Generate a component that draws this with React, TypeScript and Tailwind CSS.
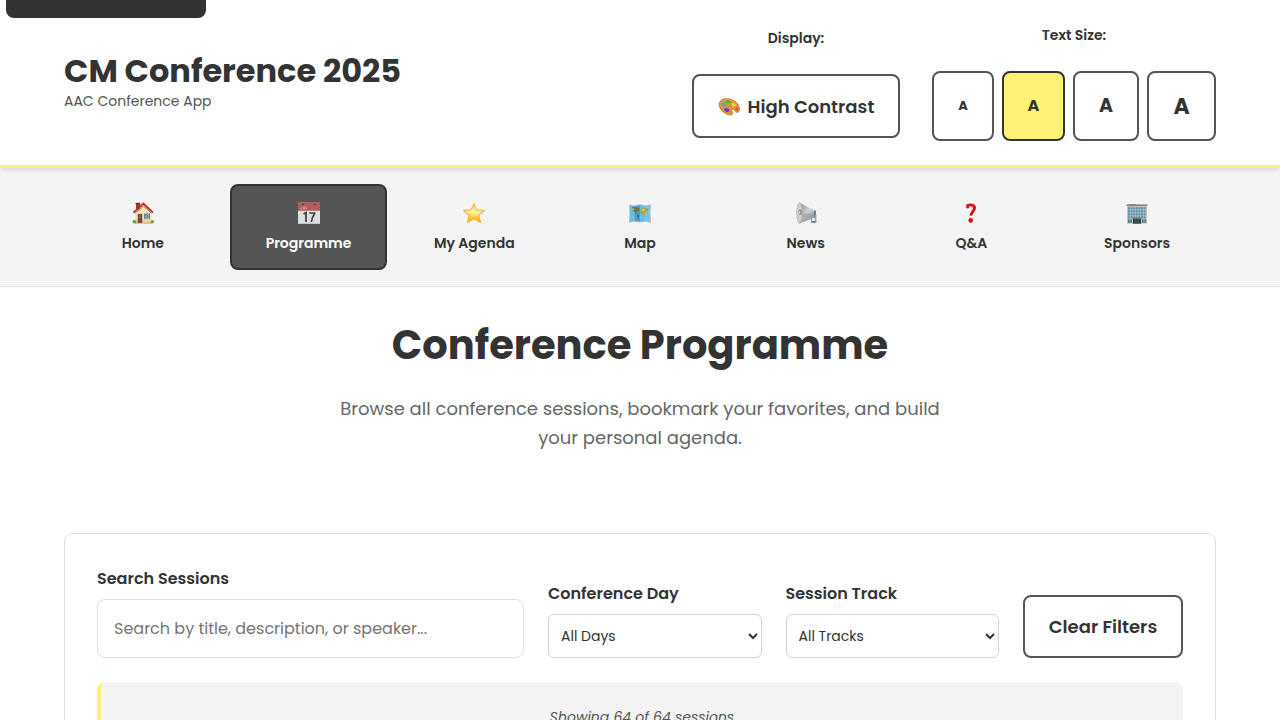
function HouseIcon() {
  return (
    <svg aria-hidden="true" viewBox="0 0 24 24" className="size-6">
      <rect x="5" y="3" width="4" height="7" fill="#a3352c" />
      <rect x="4.6" y="2.8" width="4.8" height="1.4" fill="#7d2620" />
      <path d="M4.4 12.5 12.5 5l7.8 7.5V23H4.4z" fill="#f6e2b8" />
      <path d="M4.4 19h16v4h-16z" fill="#ecd3a0" />
      <path d="M2.5 12.6 12.4 3.6l9.6 9" fill="none" stroke="#b92f2b" strokeWidth="1.9" />
      <path d="M4 13.4 12.4 6l8.2 7.4" fill="none" stroke="#7c3328" strokeWidth=".6" />
      <rect x="6.8" y="14" width="4.4" height="9" fill="#7a4632" />
      <rect x="8" y="15.2" width="2" height="3.3" fill="#547088" />
      <rect x="13" y="13.6" width="6" height="5" fill="#8a6b55" />
      <rect x="13.7" y="14.2" width="4.6" height="3.8" fill="#56a7df" />
      <path d="M3 23a1.5 1.5 0 0 1 0-3c2 0 2.6 1.6 2.2 3zM21.7 23a1.4 1.4 0 0 0 0-2.8c-1.8 0-2.4 1.5-2.2 2.8z" fill="#6d9a35" />
      <path d="M2.5 23.2h19.3" stroke="#9c8968" strokeWidth=".6" />
    </svg>
  );
}

function CalendarIcon() {
  return (
    <svg aria-hidden="true" viewBox="0 0 24 24" className="size-6">
      <rect x="1" y="2" width="22" height="22" fill="#dfdfdf" />
      <rect x="1" y="2" width="22" height="8.3" fill="#b75b5c" />
      <path d="M1 10.3h22" stroke="#a45152" strokeWidth=".7" />
      <path d="M1 23.5h22" stroke="#bdbdbd" strokeWidth=".8" />
      <circle cx="6" cy="4" r="1.2" fill="#593c3c" />
      <circle cx="18" cy="4" r="1.2" fill="#593c3c" />
      <path d="M6 2v2M18 2v2" stroke="#b4a0a0" strokeWidth=".7" />
      <path d="M3.2 9V8M5 6.5V9H3.4M6.4 6.5V9h1.4V6.5M9.2 6.5V9h1" fill="none" stroke="#d99a9a" strokeWidth=".8" />
      <path d="M6.6 14 9 12.6V22M12.3 13h5.3v.8c-1.8 2.3-2.8 5-3.2 8.2" fill="none" stroke="#3d3d3d" strokeWidth="1.7" />
    </svg>
  );
}

function StarIcon() {
  return (
    <svg aria-hidden="true" viewBox="0 0 24 24" className="size-6">
      <defs>
        <linearGradient id="star" x1="0" y1="0" x2="0" y2="1">
          <stop offset="0" stopColor="#ffe04f" />
          <stop offset=".45" stopColor="#fff3a4" />
          <stop offset=".75" stopColor="#ffc933" />
          <stop offset="1" stopColor="#f5a400" />
        </linearGradient>
      </defs>
      <path
        d="m12 3.6 2.8 6.3 7.5.6-5.6 4.8 1.9 7.2-6.6-3.7-6.6 3.7 1.9-7.2-5.6-4.8 7.5-.6z"
        fill="url(#star)"
        stroke="#f3b33b"
        strokeWidth="1.1"
        strokeLinejoin="round"
      />
    </svg>
  );
}

function MapIcon() {
  return (
    <svg aria-hidden="true" viewBox="0 0 24 24" className="size-6">
      <path d="m1 4.5 5.5 1L12 4.3l5.5 1.2L23 4.5l-.5 9 .5 9-5.5-.8-5.5.8-5.5-.8-5.5.8.5-9z" fill="#a9bcc4" />
      <path d="m2 5.5 4.5.9v14.4l-4.5.7.4-8zM12 5.3l5.5 1.2v14.3l-5.5.7z" fill="#63bff2" />
      <path d="m6.5 6.4 5.5-1.1v16.2l-5.5-.7z" fill="#4b9bd3" />
      <path d="m17.5 6.5 4.5-1-.4 8 .4 8-4.5-.7z" fill="#72c8f4" />
      <path d="m3.5 7.5 3-.8 5.2 1.8-1 2.4-2 .7-.4 2.3-2-2.2-1.5-2zM9 14l2.2 1.6-1 3.4-1.2-1.6z" fill="#667836" />
      <path d="m12.7 10 2.3-2 5.7.2-1 3.1-2 .6-1 1.8-1.4-1-.5 3.4-1.6-2.7-1.3-1z" fill="#b0a33b" />
      <path d="m14 9.5 3-.5-1 1.6-1.7.7z" fill="#f0dc69" />
      <path d="m18.3 15.5 2 .5-.4 1.5-1.5-.4z" fill="#d9a443" />
      <path d="m4 8.3 3 .7-1.6 1z" fill="#e6d66d" />
    </svg>
  );
}

function MegaphoneIcon() {
  return (
    <svg aria-hidden="true" viewBox="0 0 24 24" className="size-6">
      <defs>
        <linearGradient id="horn" x1="0" y1="0" x2="1" y2="1">
          <stop offset="0" stopColor="#858585" />
          <stop offset=".5" stopColor="#d2d2d2" />
          <stop offset="1" stopColor="#8c8c8c" />
        </linearGradient>
      </defs>
      <path d="M5 2.6 20.8 10.8v6.6L5 23.7z" fill="url(#horn)" />
      <path d="m8 14 12.8-1v4.2L6 23.2z" fill="#8f9192" opacity=".55" />
      <ellipse cx="5.5" cy="13.1" rx="3.2" ry="10.6" fill="#b7b7b7" />
      <ellipse cx="5.3" cy="13.1" rx="2.3" ry="9.3" fill="#cfcfcf" />
      <ellipse cx="6" cy="12.3" rx="1.6" ry="2.7" fill="#7b7b7b" />
      <ellipse cx="5.6" cy="12.3" rx=".9" ry="1.6" fill="#d5d5d5" />
      <path d="M20 10.5h2v7h-2z" fill="#6f8392" />
      <path d="M17.6 16v6.1h4V15" fill="none" stroke="#8fa5b7" strokeWidth="1.6" />
      <path d="M18.4 21.8h2.7" stroke="#4a5761" strokeWidth="1.1" />
    </svg>
  );
}

function QuestionIcon() {
  return (
    <svg aria-hidden="true" viewBox="0 0 24 24" className="size-6">
      <path
        d="M8.6 8.2V5.5c2.2-1.2 7-.9 7 2.5 0 2.8-3.6 4-3.8 7.7"
        fill="none"
        stroke="#e30b0b"
        strokeWidth="2.8"
      />
      <circle cx="11.7" cy="20.4" r="2.3" fill="#e30b0b" />
    </svg>
  );
}

function BuildingIcon() {
  return (
    <svg aria-hidden="true" viewBox="0 0 24 24" className="size-6">
      <rect x="2" y="5" width="20" height="18.7" fill="#c1c2bb" />
      <path d="M4 4h7v1.2H4z" fill="#a29b91" />
      <path d="M1.5 5.2h21" stroke="#8f8176" strokeWidth="1.6" />
      <path d="M3 8.4h18M3 11.4h18M3 14.4h18M3 17.4h18" stroke="#5e91aa" strokeWidth="2.1" strokeDasharray="2 .6" />
      <path d="M3 21.2h4.5M17 21.2h4.5" stroke="#456d85" strokeWidth="3.2" strokeDasharray="1.6 .7" />
      <rect x="8" y="18.3" width="8" height="5.4" fill="#2d3f4c" />
      <path d="M7.5 18.3h9" stroke="#8e6d5d" strokeWidth="1" />
      <path d="M10.7 19v4.7M13.4 19v4.7" stroke="#647f8d" strokeWidth=".5" />
    </svg>
  );
}

function PaletteIcon() {
  return (
    <svg aria-hidden="true" viewBox="0 0 22 24" className="h-6 w-[22px]">
      <path
        d="M2 7.2C5 3.5 12.500 4 17 7.200c4 2.900 5.500 7.500 4 10.300-.9 1.700-2.100 1.200-3.200.3-1.200-1-2.300-3-3.700-2.600-1.500.5.8 2.700.6 4.300-.3 2.300-4.700 1.800-8.200-.5C2.400 16.400-.5 10.500 2 7.200z"
        fill="#d7953d"
        stroke="#a9672a"
        strokeWidth=".6"
      />
      <path d="M3 8C6 5 12 5 16 8" fill="none" stroke="#edb964" strokeWidth=".8" />
      <ellipse cx="5.600" cy="10.500" rx="2.300" ry="1.700" transform="rotate(35 5.600 10.500)" fill="#26b5ea" />
      <ellipse cx="10" cy="7.700" rx="2.500" ry="1.500" transform="rotate(15 10 7.700)" fill="#45b92c" />
      <ellipse cx="15.700" cy="10.700" rx="2.100" ry="1.700" transform="rotate(35 15.700 10.700)" fill="#f7d52a" />
      <ellipse cx="18.800" cy="15" rx="1.400" ry="1.900" transform="rotate(-30 18.800 15)" fill="#ee5148" />
      <ellipse cx="8.800" cy="16" rx="2.700" ry="1.800" transform="rotate(20 8.800 16)" fill="#842bd0" />
    </svg>
  );
}

const navItems = [
  { Icon: HouseIcon, label: "Home" },
  { Icon: CalendarIcon, label: "Programme", active: true },
  { Icon: StarIcon, label: "My Agenda" },
  { Icon: MapIcon, label: "Map" },
  { Icon: MegaphoneIcon, label: "News" },
  { Icon: QuestionIcon, label: "Q&A" },
  { Icon: BuildingIcon, label: "Sponsors" },
];

const textSizes = [
  { name: "Small", style: "w-[62px] text-[13px] border-[#555555]" },
  { name: "Medium", style: "w-[63px] text-[16px] border-[#333333] bg-[#fff176]", active: true },
  { name: "Large", style: "w-[66px] text-[19px] border-[#555555]" },
  { name: "Extra large", style: "w-[69px] text-[22px] border-[#555555]" },
];

function Header() {
  return (
    <header className="relative z-10 border-b-3 border-[#fff176] bg-white px-16 py-6 shadow-[0_2px_4px_rgba(0,0,0,0.1)]">
      <div className="flex items-center justify-between">
        <div className="pb-0.5">
          <p className="text-[32px] leading-[38px] font-bold">CM Conference 2025</p>
          <p className="text-[14px] leading-[22px] text-[#555555]">AAC Conference App</p>
        </div>
        <div className="flex items-center gap-8">
          <div className="flex flex-col items-center gap-[25px]">
            <span className="text-[14px] leading-[22px] font-semibold">Display:</span>
            <button
              type="button"
              className="flex h-16 w-[208px] items-center justify-center gap-2 rounded-lg border-2 border-[#555555] text-[18px] font-semibold whitespace-nowrap"
            >
              <PaletteIcon />
              High Contrast
            </button>
          </div>
          <div className="flex flex-col items-center gap-[25px]">
            <span className="text-[14px] leading-[22px] font-semibold">Text Size:</span>
            <div className="flex gap-2">
              {textSizes.map((s) => (
                <button
                  key={s.name}
                  type="button"
                  aria-label={s.name}
                  aria-pressed={!!s.active}
                  className={`h-[70px] rounded-lg border-2 font-bold ${s.style}`}
                >
                  A
                </button>
              ))}
            </div>
          </div>
        </div>
      </div>
    </header>
  );
}

function Nav() {
  return (
    <nav className="border-b border-[#e0e0e0] bg-[#f4f4f4] px-16 py-4">
      <ul className="grid grid-cols-7 gap-2">
        {navItems.map(({ Icon, label, active }) => (
          <li key={label}>
            <a
              href="#"
              aria-current={active ? "page" : undefined}
              className={`flex h-[86px] flex-col items-center justify-center gap-2 rounded-lg border-2 ${
                active ? "border-[#333333] bg-[#555555] text-white" : "border-transparent"
              }`}
            >
              <Icon />
              <span className="text-[14px] leading-[22px] font-semibold">{label}</span>
            </a>
          </li>
        ))}
      </ul>
    </nav>
  );
}

function Filters() {
  return (
    <section className="mt-20 rounded-lg border border-[#e0e0e0] p-8">
      <div className="grid grid-cols-[2fr_1fr_1fr_160px] items-end gap-6">
        <div className="flex flex-col gap-2">
          <label htmlFor="search" className="text-[16px] leading-[25px] font-semibold">
            Search Sessions
          </label>
          <input
            id="search"
            type="text"
            placeholder="Search by title, description, or speaker..."
            className="h-[59px] w-full rounded-lg border border-[#e0e0e0] px-4 text-[16px] placeholder:text-[#757575]"
          />
        </div>
        <div className="flex flex-col gap-2">
          <label htmlFor="day" className="text-[16px] leading-[25px] font-semibold">
            Conference Day
          </label>
          <select id="day" className="h-11 w-full rounded-md border border-[#d1d5db] bg-white px-2 text-[14px]">
            <option>All Days</option>
          </select>
        </div>
        <div className="flex flex-col gap-2">
          <label htmlFor="track" className="text-[16px] leading-[25px] font-semibold">
            Session Track
          </label>
          <select id="track" className="h-11 w-full rounded-md border border-[#d1d5db] bg-white px-2 text-[14px]">
            <option>All Tracks</option>
          </select>
        </div>
        <button
          type="button"
          className="h-[63px] rounded-lg border-2 border-[#555555] text-[18px] font-semibold whitespace-nowrap"
        >
          Clear Filters
        </button>
      </div>
      <p className="mt-6 rounded-lg border-l-4 border-[#fff176] bg-[#f4f4f4] p-6 text-center text-[14px] leading-[22px] text-[#555555] italic">
        Showing 64 of 64 sessions
      </p>
    </section>
  );
}

export default function App() {
  return (
    <div className="relative h-screen overflow-hidden bg-white font-['Poppins','Noto_Sans',sans-serif] text-[#333333]">
      <a
        href="#main"
        className="absolute -top-10 left-1.5 z-20 flex h-[58px] w-[200px] items-start justify-center rounded-lg bg-[#333333] pt-2 text-[14px] text-white"
      >
        Skip to main content
      </a>
      <Header />
      <Nav />
      <main id="main" className="px-16 pt-8">
        <div className="text-center">
          <h1 className="text-[40px] leading-[53px] font-bold">Conference Programme</h1>
          <p className="mx-auto mt-[22px] mb-[81px] max-w-[600px] text-[18px] leading-[29px] text-[#666666]">
            Browse all conference sessions, bookmark your favorites, and build your personal agenda.
          </p>
        </div>
        <Filters />
      </main>
    </div>
  );
}
